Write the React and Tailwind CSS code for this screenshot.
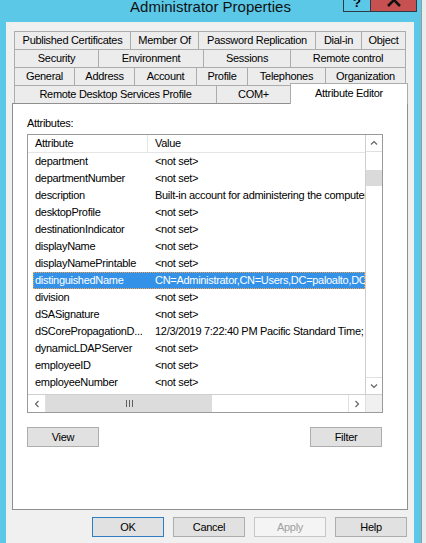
import React from "react";

const tabRows = [
    [["Published Certificates", "w-[116px]"], ["Member Of", "w-[68px]"], ["Password Replication", "w-[117px]"], ["Dial-in", "w-[46px]"], ["Object", "w-[45px] border-r"]],
    [["Security", "w-[84px]"], ["Environment", "w-[105px]"], ["Sessions", "w-[87px]"], ["Remote control", "w-[116px] border-r"]],
    [["General", "w-[60px]"], ["Address", "w-[60px]"], ["Account", "w-[62px]"], ["Profile", "w-[51px]"], ["Telephones", "w-[78px]"], ["Organization", "w-[81px] border-r"]],
]

const rows = [
    ["department", "<not set>"],
    ["departmentNumber", "<not set>"],
    ["description", "Built-in account for administering the computer/domain"],
    ["desktopProfile", "<not set>"],
    ["destinationIndicator", "<not set>"],
    ["displayName", "<not set>"],
    ["displayNamePrintable", "<not set>"],
    ["distinguishedName", "CN=Administrator,CN=Users,DC=paloalto,DC=local", true],
    ["division", "<not set>"],
    ["dSASignature", "<not set>"],
    ["dSCorePropagationD...", "12/3/2019 7:22:40 PM Pacific Standard Time; 1/1/1601 12:00:01 AM"],
    ["dynamicLDAPServer", "<not set>"],
    ["employeeID", "<not set>"],
    ["employeeNumber", "<not set>"],
    ["employeeType", "<not set>"],
]

const Chevron = ({ dir }) => {
    const d = {
        up: "M1 4.5 L4 1.5 L7 4.5",
        down: "M1 1.5 L4 4.5 L7 1.5",
        left: "M4.5 1 L1.5 4 L4.5 7",
        right: "M1.5 1 L4.5 4 L1.5 7",
    }[dir]
    const vert = dir == "up" || dir == "down"
    return (
        <svg width={vert ? 8 : 6} height={vert ? 6 : 8} viewBox={vert ? "0 0 8 6" : "0 0 6 8"}>
            <path d={d} fill="none" stroke="#606060" strokeWidth="1.1" />
        </svg>
    )
}

const Button = ({ children, className = "" }) => (
    <div className={"w-[72px] h-[20px] flex items-center justify-center border " + className}>{children}</div>
)

export default function App() {
    return (
        <div className="w-[426px] h-[543px] flex overflow-hidden bg-[#5bc8e8] font-['Liberation_Sans',Arial,sans-serif] text-[11px] tracking-[-0.3px] text-black">

            <div className="w-[421px] flex flex-col">
                {/* title bar */}
                <div className="relative h-[22px] shrink-0">
                    <div className="text-center text-[15px] leading-[15px] tracking-normal -mt-px text-[#111]">Administrator Properties</div>
                    <div className="absolute top-0 right-[4px] flex h-[12px]">
                        <div className="w-[27px] h-[12px] border border-t-0 border-r-0 border-[#2f3a44] flex justify-center overflow-hidden">
                            <span className="font-bold text-[13px] leading-[13px] -mt-[4px] tracking-normal">?</span>
                        </div>
                        <div className="w-[47px] h-[12px] bg-[#c75050] border border-t-0 border-[#2f3a44] flex justify-center overflow-hidden">
                            <svg width="14" height="11" viewBox="0 0 14 11">
                                <path d="M1 -6 L13 6 M13 -6 L1 6" stroke="#111" strokeWidth="2.6" />
                            </svg>
                        </div>
                    </div>
                </div>

                {/* dialog body */}
                <div className="flex-1 ml-[6px] mr-[7px] bg-[#f0f0f0] pl-[6px] pt-[9px]">

                    {tabRows.map((row, i) => (
                        <div key={i} className="flex h-[18px] ml-[2px]">
                            {row.map(([label, w]) => (
                                <div key={label} className={"h-[18px] flex items-center justify-center border-l border-t border-[#acacac] bg-[#ececec] whitespace-nowrap " + w}>{label}</div>
                            ))}
                        </div>
                    ))}
                    <div className="flex items-end h-[18px] ml-[2px]">
                        <div className="w-[202px] h-[18px] flex items-center justify-center border-l border-t border-[#acacac] bg-[#ececec]">Remote Desktop Services Profile</div>
                        <div className="w-[74px] h-[18px] flex items-center justify-center border-l border-t border-[#acacac] bg-[#ececec]">COM+</div>
                        <div className="relative z-10 w-[118px] h-[21px] -mb-px flex items-center justify-center pb-[2px] border-l border-t border-r border-[#acacac] bg-white">Attribute Editor</div>
                    </div>

                    {/* tab panel */}
                    <div className="w-[396px] h-[407px] border border-[#8f8f8f] bg-white pl-[14px] pt-[13px]">
                        <div className="leading-[13px]">Attributes:</div>

                        <div className="mt-[4px] w-[356px] h-[279px] border border-[#9a9a9a] flex flex-col">
                            <div className="flex h-[259px]">
                                <div className="flex-1 overflow-hidden">
                                    <div className="flex h-[18px] border-b border-[#e5e5e5] leading-[17px]">
                                        <div className="w-[120px] pl-[7px] border-r border-[#e5e5e5]">Attribute</div>
                                        <div className="pl-[7px]">Value</div>
                                    </div>
                                    {rows.map(([a, v, sel]) => (
                                        <div key={a} className="h-[17px] pl-[5px] flex leading-[17px]">
                                            <div className={"flex-1 flex whitespace-nowrap overflow-hidden " + (sel ? "bg-[#3392e8] text-white outline-1 outline-dotted outline-[#f5a04a] -outline-offset-1" : "")}>
                                                <div className="w-[115px] pl-[2px] shrink-0 overflow-hidden">{a}</div>
                                                <div className="pl-[7px]">{v}</div>
                                            </div>
                                        </div>
                                    ))}
                                </div>
                                <div className="w-[17px] border-l border-[#cfcfcf] flex flex-col">
                                    <div className="h-[17px] border-b border-[#e0e0e0] flex items-center justify-center"><Chevron dir="up" /></div>
                                    <div className="h-[18px]" />
                                    <div className="h-[16px] bg-[#dadada]" />
                                    <div className="flex-1" />
                                    <div className="h-[17px] border-t border-[#e0e0e0] flex items-center justify-center"><Chevron dir="down" /></div>
                                </div>
                            </div>
                            <div className="h-[18px] border-t border-[#cfcfcf] flex">
                                <div className="w-[18px] border-r border-[#e0e0e0] flex items-center justify-center"><Chevron dir="left" /></div>
                                <div className="w-[166px] bg-[#dcdcdc] flex items-center justify-center gap-[2px]">
                                    <span className="w-px h-[7px] bg-[#606060]" />
                                    <span className="w-px h-[7px] bg-[#606060]" />
                                    <span className="w-px h-[7px] bg-[#606060]" />
                                </div>
                                <div className="flex-1" />
                                <div className="w-[17px] border-l border-[#e0e0e0] flex items-center justify-center"><Chevron dir="right" /></div>
                                <div className="w-[17px] border-l border-[#e0e0e0] bg-[#f0f0f0]" />
                            </div>
                        </div>

                        <div className="mt-[14px] w-[355px] flex justify-between">
                            <Button className="bg-[#e1e1e1] border-[#adadad]">View</Button>
                            <Button className="bg-[#e1e1e1] border-[#adadad]">Filter</Button>
                        </div>
                    </div>

                    <div className="mt-[7px] pr-[7px] flex justify-end gap-[9px]">
                        <Button className="bg-[#e1e1e1] border-[#2f7dc4]">OK</Button>
                        <Button className="bg-[#e1e1e1] border-[#adadad]">Cancel</Button>
                        <Button className="bg-[#f4f4f4] border-[#c6c6c6] text-[#a0a0a0]">Apply</Button>
                        <Button className="bg-[#e1e1e1] border-[#adadad]">Help</Button>
                    </div>
                </div>
            </div>

            <div className="w-[5px] bg-[#ececec] border-l border-[#9a9a9a]" />
        </div>
    )
}
